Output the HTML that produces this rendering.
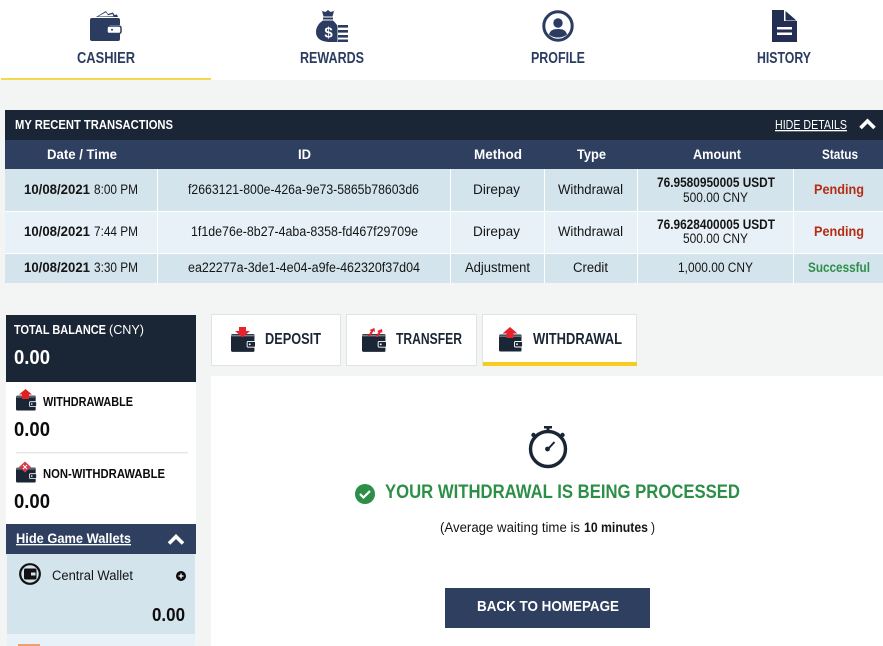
<!DOCTYPE html>
<html><head><meta charset="utf-8"><title>Cashier</title>
<style>
html,body{margin:0;padding:0;background:#f3f4f4;width:883px;height:646px;overflow:hidden}
svg{display:block}
text{font-family:"Liberation Sans",Arial,sans-serif;font-size:13.5px;fill:#151515;white-space:pre}
.b{font-weight:700}
.nav{font-weight:700;font-size:16px;fill:#2b3c60}
.tab{font-weight:700;font-size:15.5px;fill:#1a2535}
.w{fill:#fff}
.h{font-weight:700;font-size:13.5px;fill:#fff}
.bal{font-weight:700;font-size:20.5px;fill:#0c0c0c}
.sb{font-weight:700;font-size:12.5px;fill:#0c0c0c}
.r{font-weight:700;font-size:14px;fill:#b52c12}
</style></head><body>
<svg width="883" height="646" viewBox="0 0 883 646" xmlns="http://www.w3.org/2000/svg">
<defs>
<symbol id="wal" viewBox="0 0 24 17">
<path d="M1.500 0H21.500a1 1 0 0 1 1 1v15a1 1 0 0 1-1 1H1.500A1.500 1.500 0 0 1 0 15.500V1.500A1.500 1.500 0 0 1 1.500 0z" fill="#1a2535"/>
<rect x="0" y="1.200" width="22" height=".8" fill="#fff" opacity=".7"/>
<rect x="15.500" y="7" width="8" height="5.500" rx="1" fill="#1a2535" stroke="#fff" stroke-width=".9"/>
<circle cx="18" cy="9.700" r=".9" fill="#fff"/>
</symbol>
</defs>

<!-- top nav -->
<rect x="0" y="0" width="883" height="80" fill="#fff"/>
<rect x="1" y="78" width="210" height="2" fill="#f5d94a"/>

<path d="M96 17l10-6 2 3 5-1.500 1.500 2.500 2.500-.5 1 2.500H96z" fill="#2b3c60"/>
<path d="M98 16.500l8-4.300 2 3 4.500-1.200 1 2.200z" fill="#fff"/>
<path d="M92 18H118a2 2 0 0 1 2 2v5h-9a4 4 0 0 0-4 4v1a4 4 0 0 0 4 4h9v5a2 2 0 0 1-2 2H92a2 2 0 0 1-2-2V20a2 2 0 0 1 2-2z" fill="#2b3c60"/>
<rect x="107" y="26" width="14" height="7.500" rx="2" fill="#fff" stroke="#2b3c60" stroke-width="1.500"/>
<circle cx="112" cy="29.700" r="1" fill="#2b3c60"/>
<text class="nav" x="77" y="63" textLength="58" lengthAdjust="spacingAndGlyphs">CASHIER</text>

<path d="M322 11l3.500 1 2.500-2 2.500 2 3.500-1-1.500 5.500h-9z" fill="#2b3c60"/>
<rect x="323" y="17.500" width="10" height="2" fill="#2b3c60"/>
<path d="M323 20.500h10c2 2 3.500 3.500 4.500 5.500V42h-7C322 42 316 39 316 32c0-5 3-9 7-11.500z" fill="#2b3c60"/>
<text x="328.500" y="37.500" text-anchor="middle" style="font-size:15px;font-weight:700;fill:#fff">$</text>
<path d="M338 25h10v2.600h-10zM338 30h10v2.600h-10zM338 35h10v2.600h-10zM338 39.500h10V42h-10z" fill="#2b3c60"/>
<text class="nav" x="300" y="63" textLength="64" lengthAdjust="spacingAndGlyphs">REWARDS</text>

<circle cx="558" cy="26" r="14.200" fill="none" stroke="#2b3c60" stroke-width="3"/>
<circle cx="558" cy="23" r="4.700" fill="#2b3c60"/>
<path d="M549 34.500c1-4 4-5.500 9-5.500s8 1.500 9 5.500c-2.500 2-5.500 3-9 3s-6.500-1-9-3z" fill="#2b3c60"/>
<text class="nav" x="531" y="63" textLength="54" lengthAdjust="spacingAndGlyphs">PROFILE</text>

<path d="M772 10h12v11h13v21h-25z" fill="#222e52"/>
<path d="M785.500 11l11 9.500h-11z" fill="#222e52"/>
<rect x="777" y="27" width="15" height="2.500" fill="#fff"/>
<rect x="777" y="32.500" width="15" height="2.500" fill="#fff"/>
<text class="nav" x="757" y="63" textLength="54" lengthAdjust="spacingAndGlyphs">HISTORY</text>

<!-- transactions -->
<rect x="5" y="110" width="878" height="30" fill="#1a2535"/>
<rect x="5" y="140" width="878" height="29" fill="#2f3f60"/>
<rect x="5" y="169" width="878" height="42" fill="#d3e4ec"/>
<rect x="5" y="211" width="878" height="43" fill="#e7f1f7"/>
<rect x="5" y="254" width="878" height="29" fill="#d3e4ec"/>
<g fill="#fff">
<rect x="5" y="211" width="878" height="1"/><rect x="5" y="253" width="878" height="1"/>
<rect x="157" y="169" width="1" height="114"/><rect x="450" y="169" width="1" height="114"/>
<rect x="544" y="169" width="1" height="114"/><rect x="637" y="169" width="1" height="114"/>
<rect x="793" y="169" width="1" height="114"/>
</g>
<text x="15" y="129" textLength="158" lengthAdjust="spacingAndGlyphs" style="font-size:13px;font-weight:700;fill:#fff">MY RECENT TRANSACTIONS</text>
<text class="w" x="775" y="129" textLength="72" lengthAdjust="spacingAndGlyphs" style="font-size:13px;text-decoration:underline">HIDE DETAILS</text>
<path d="M860.500 128l7-7 7 7" fill="none" stroke="#fff" stroke-width="3.600"/>
<text class="h" x="47" y="159" textLength="70" lengthAdjust="spacingAndGlyphs">Date / Time</text>
<text class="h" x="298" y="159" textLength="13" lengthAdjust="spacingAndGlyphs">ID</text>
<text class="h" x="474" y="159" textLength="48" lengthAdjust="spacingAndGlyphs">Method</text>
<text class="h" x="577" y="159" textLength="29" lengthAdjust="spacingAndGlyphs">Type</text>
<text class="h" x="693" y="159" textLength="48" lengthAdjust="spacingAndGlyphs">Amount</text>
<text class="h" x="822" y="159" textLength="36" lengthAdjust="spacingAndGlyphs">Status</text>

<text class="b" x="24" y="194" textLength="66" lengthAdjust="spacingAndGlyphs">10/08/2021</text>
<text x="94" y="194" textLength="44" lengthAdjust="spacingAndGlyphs">8:00 PM</text>
<text x="188" y="194" textLength="231" lengthAdjust="spacingAndGlyphs">f2663121-800e-426a-9e73-5865b78603d6</text>
<text x="473" y="194" textLength="47" lengthAdjust="spacingAndGlyphs">Direpay</text>
<text x="558" y="194" textLength="65" lengthAdjust="spacingAndGlyphs">Withdrawal</text>
<text class="b" x="657" y="187" textLength="118" lengthAdjust="spacingAndGlyphs">76.9580950005 USDT</text>
<text x="683" y="202" textLength="65" lengthAdjust="spacingAndGlyphs">500.00 CNY</text>
<text class="r" x="814" y="194" textLength="50" lengthAdjust="spacingAndGlyphs">Pending</text>

<text class="b" x="24" y="236" textLength="66" lengthAdjust="spacingAndGlyphs">10/08/2021</text>
<text x="94" y="236" textLength="44" lengthAdjust="spacingAndGlyphs">7:44 PM</text>
<text x="191" y="236" textLength="227" lengthAdjust="spacingAndGlyphs">1f1de76e-8b27-4aba-8358-fd467f29709e</text>
<text x="473" y="236" textLength="47" lengthAdjust="spacingAndGlyphs">Direpay</text>
<text x="558" y="236" textLength="65" lengthAdjust="spacingAndGlyphs">Withdrawal</text>
<text class="b" x="657" y="229" textLength="118" lengthAdjust="spacingAndGlyphs">76.9628400005 USDT</text>
<text x="683" y="243" textLength="65" lengthAdjust="spacingAndGlyphs">500.00 CNY</text>
<text class="r" x="814" y="236" textLength="50" lengthAdjust="spacingAndGlyphs">Pending</text>

<text class="b" x="24" y="272" textLength="66" lengthAdjust="spacingAndGlyphs">10/08/2021</text>
<text x="94" y="272" textLength="44" lengthAdjust="spacingAndGlyphs">3:30 PM</text>
<text x="188" y="272" textLength="232" lengthAdjust="spacingAndGlyphs">ea22277a-3de1-4e04-a9fe-462320f37d04</text>
<text x="465" y="272" textLength="65" lengthAdjust="spacingAndGlyphs">Adjustment</text>
<text x="573" y="272" textLength="35" lengthAdjust="spacingAndGlyphs">Credit</text>
<text x="678" y="272" textLength="75" lengthAdjust="spacingAndGlyphs">1,000.00 CNY</text>
<text x="808" y="272" textLength="62" lengthAdjust="spacingAndGlyphs" style="font-size:13.500px;font-weight:700;fill:#2f8f4a">Successful</text>

<!-- sidebar -->
<rect x="6" y="315" width="190" height="67" fill="#1a2535"/>
<rect x="6" y="382" width="190" height="142" fill="#fff"/>
<rect x="6" y="524" width="190" height="30" fill="#2f3f60"/>
<rect x="7" y="554" width="188" height="80" fill="#d3e4ec"/>
<rect x="7" y="634" width="188" height="12" fill="#e7f1f7"/>
<rect x="18" y="644" width="22" height="2" fill="#f0a070"/>
<text x="14" y="334" textLength="92" lengthAdjust="spacingAndGlyphs" style="font-size:13px;font-weight:700;fill:#fff">TOTAL BALANCE</text>
<text x="109" y="334" textLength="35" lengthAdjust="spacingAndGlyphs" style="font-size:13px;fill:#fff">(CNY)</text>
<text class="bal" x="14" y="364" textLength="36" lengthAdjust="spacingAndGlyphs" style="fill:#fff">0.00</text>

<use href="#wal" x="16" y="395" width="21" height="16"/>
<path d="M25.500 389l6.500 5.500h-3v4.500h-7v-4.500h-3z" fill="#e02020"/>
<text class="sb" x="43" y="406" textLength="90" lengthAdjust="spacingAndGlyphs">WITHDRAWABLE</text>
<text class="bal" x="14" y="436" textLength="36" lengthAdjust="spacingAndGlyphs">0.00</text>
<rect x="16" y="452" width="172" height="1.500" fill="#e8e8e8"/>

<use href="#wal" x="16" y="467" width="21" height="16"/>
<path d="M25 461.500l6 5.500-6 5.500-6-5.500z" fill="#d8394a"/>
<path d="M23 465l4 4M27 465l-4 4" stroke="#fff" stroke-width="1"/>
<text class="sb" x="43" y="478" textLength="122" lengthAdjust="spacingAndGlyphs">NON-WITHDRAWABLE</text>
<text class="bal" x="14" y="508" textLength="36" lengthAdjust="spacingAndGlyphs">0.00</text>

<text x="16" y="543" textLength="115" lengthAdjust="spacingAndGlyphs" style="font-size:13.500px;font-weight:700;fill:#fff;text-decoration:underline">Hide Game Wallets</text>
<path d="M169 543.500l7-7 7 7" fill="none" stroke="#fff" stroke-width="3.600"/>

<circle cx="30" cy="574" r="9.800" fill="none" stroke="#111" stroke-width="2.200"/>
<path d="M38 566l3-2M22 582l-3 2" stroke="#d3e4ec" stroke-width="2.500"/>
<rect x="24" y="568.500" width="12.500" height="11" rx="1.500" fill="#111"/>
<rect x="31" y="572.500" width="4.500" height="3" fill="#d3e4ec"/>
<text x="52" y="580" textLength="81" lengthAdjust="spacingAndGlyphs">Central Wallet</text>
<circle cx="181" cy="576" r="5" fill="#0c0c0c"/>
<path d="M178.500 576h5M181 573.500v5" stroke="#fff" stroke-width="1.300"/>
<text x="152" y="621" textLength="33" lengthAdjust="spacingAndGlyphs" style="font-size:18.500px;font-weight:700;fill:#0c0c0c">0.00</text>

<!-- tabs -->
<rect x="211.500" y="314.500" width="129" height="51" fill="#fff" stroke="#dfe3e8"/>
<rect x="346.500" y="314.500" width="130" height="51" fill="#fff" stroke="#dfe3e8"/>
<rect x="482.500" y="314.500" width="154" height="51" fill="#fff" stroke="#dfe3e8"/>
<rect x="483" y="362" width="154" height="4" fill="#f7cc1e"/>

<use href="#wal" x="231" y="334" width="25" height="18"/>
<path d="M239 327h7v4h4l-7.500 6.500-7.500-6.500h4z" fill="#e8222e"/>
<text class="tab" x="265" y="344" textLength="56" lengthAdjust="spacingAndGlyphs">DEPOSIT</text>

<use href="#wal" x="362" y="334" width="25" height="18"/>
<path d="M368 336l3-5-1.500-1 5-2 .5 4-1.500-1-3 5zM375.500 337l3-5-1.500-1 5-2 .5 4-1.500-1-3 5z" fill="#e8222e"/>
<text class="tab" x="396" y="344" textLength="66" lengthAdjust="spacingAndGlyphs">TRANSFER</text>

<use href="#wal" x="499" y="334" width="24" height="18"/>
<path d="M510 327l7.500 6.500h-4v4.500h-7v-4.500h-4z" fill="#e8222e"/>
<text class="tab" x="533" y="344" textLength="89" lengthAdjust="spacingAndGlyphs">WITHDRAWAL</text>

<!-- content -->
<rect x="211" y="376" width="672" height="270" fill="#fff"/>
<circle cx="548" cy="449" r="17.500" fill="none" stroke="#1a2535" stroke-width="3.400"/>
<rect x="544" y="426" width="8" height="2.500" fill="#1a2535"/>
<rect x="546.500" y="428" width="3" height="4" fill="#1a2535"/>
<circle cx="533.500" cy="435" r="2.200" fill="#1a2535"/>
<circle cx="562.500" cy="435" r="2.200" fill="#1a2535"/>
<circle cx="547.500" cy="449" r="2.400" fill="#1a2535"/>
<path d="M548 449l6.500-7" stroke="#1a2535" stroke-width="2"/>

<circle cx="365" cy="494" r="10" fill="#2d8f47"/>
<path d="M360 494l3.500 3.500 6.500-6.500" fill="none" stroke="#fff" stroke-width="2.200"/>
<text x="385" y="498" textLength="355" lengthAdjust="spacingAndGlyphs" style="font-size:19px;font-weight:700;fill:#2d8f47">YOUR WITHDRAWAL IS BEING PROCESSED</text>
<text x="440" y="532" textLength="140" lengthAdjust="spacingAndGlyphs">(Average waiting time is</text>
<text x="584" y="532" textLength="64" lengthAdjust="spacingAndGlyphs" style="font-weight:700">10 minutes</text>
<text x="651" y="532" textLength="4" lengthAdjust="spacingAndGlyphs">)</text>

<rect x="445" y="588" width="205" height="40" fill="#2f3f60"/>
<text x="477" y="611" textLength="142" lengthAdjust="spacingAndGlyphs" style="font-size:15px;font-weight:700;fill:#fff">BACK TO HOMEPAGE</text>
</svg>
</body></html>
